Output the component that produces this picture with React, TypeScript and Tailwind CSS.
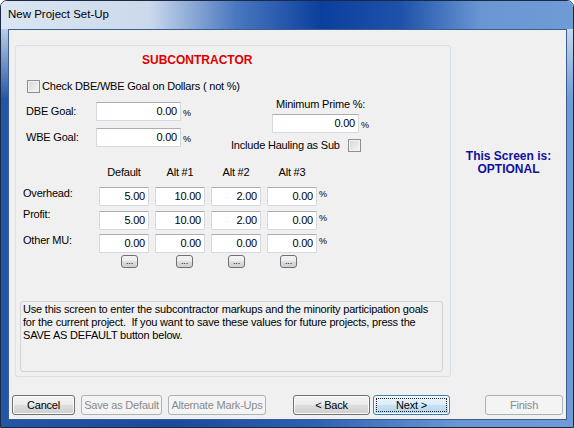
import React from 'react';

// Win7-style "New Project Set-Up" wizard page (subcontractor markups)

const btnBase = 'h-[20px] rounded-[3px] border text-center leading-[18px] text-[11px] shrink-0';
const btnNormal =
    'border-[#707070] bg-[linear-gradient(180deg,#f3f3f3_0%,#ebebeb_48%,#dddddd_52%,#cfcfcf_100%)] shadow-[inset_0_0_0_1px_#fbfbfb] text-black';
const btnDisabled = 'border-[#adb2b5] bg-[#f4f4f4] text-[#8a8a8a]';

function Field({ value, w }: { value: string; w: string }) {
    return (
        <div
            className={`${w} h-[19px] shrink-0 bg-white border border-[#d5d9e0] border-t-[#abadb3] text-right pr-[3px] leading-[17px] text-[11px] text-black`}
        >
            {value}
        </div>
    );
}

function Pct() {
    return <span className="ml-[2px] text-[9px] leading-none mt-[3px]">%</span>;
}

function Checkbox({ className = '' }: { className?: string }) {
    return (
        <span
            className={`inline-block w-[13px] h-[13px] shrink-0 border border-[#8e8f8f] bg-[linear-gradient(135deg,#d6d6d6_0%,#f6f6f6_100%)] shadow-[inset_0_0_0_1px_#f2f2f2] ${className}`}
        />
    );
}

function Dots({ className = '' }: { className?: string }) {
    return (
        <div
            className={`w-[17px] h-[13px] shrink-0 rounded-[3px] border border-[#707070] bg-[linear-gradient(180deg,#f3f3f3_0%,#ebebeb_48%,#dddddd_52%,#cfcfcf_100%)] flex items-end justify-center text-[9px] leading-[9px] pb-[1px] ${className}`}
        >
            ...
        </div>
    );
}

const rows = [
    { label: 'Overhead:', values: ['5.00', '10.00', '2.00', '0.00'], rowMt: 'mt-[8px]', labelMt: 'mt-0' },
    { label: 'Profit:', values: ['5.00', '10.00', '2.00', '0.00'], rowMt: 'mt-[5px]', labelMt: '-mt-[3px]' },
    { label: 'Other MU:', values: ['0.00', '0.00', '0.00', '0.00'], rowMt: 'mt-[4px]', labelMt: 'mt-0' },
];

export default function App() {
    return (
        <div className="w-[574px] h-[428px] flex flex-col overflow-hidden rounded-t-[7px] border border-[#1b2a44] font-['Liberation_Sans',Arial,sans-serif] text-[11px] text-black">
            {/* title bar */}
            <div className="h-[28px] shrink-0 flex items-center pl-[7px] text-[11.5px] bg-[linear-gradient(90deg,#dbe6f2_0%,#cbd9ec_26%,#4a78c0_41%,#0b3f9d_56%,#1f52aa_70%,#6a97d3_84%,#6f9cd7_100%)]">
                New Project Set-Up
            </div>

            {/* frame + client area */}
            <div className="flex-1 flex pl-[7px] pr-[6px] pb-[7px] bg-[linear-gradient(180deg,rgba(214,226,241,0.85)_0px,rgba(214,226,241,0)_70px),linear-gradient(90deg,#2556a6_0%,#1b4a9c_30%,#2e61b2_55%,#6a97d3_80%,#6f9cd7_100%)]">
                <div className="flex-1 flex flex-col border border-[#3b5e92] bg-[#f0f0f0]">
                    <div className="flex pt-[15px]">
                        {/* main panel */}
                        <div className="ml-[6px] w-[436px] h-[332px] shrink-0 border border-[#d5dfe5] rounded-[3px] flex flex-col tracking-[-0.2px]">
                            <div className="mt-[7px] pl-[126px] h-[14px] leading-[14px] text-[12px] font-bold text-[#dd0000] tracking-normal">
                                SUBCONTRACTOR
                            </div>

                            <div className="mt-[13px] ml-[11px] flex items-center h-[13px]">
                                <Checkbox />
                                <span className="ml-[2px]">Check DBE/WBE Goal on Dollars ( not %)</span>
                            </div>

                            {/* goals */}
                            <div className="mt-[5px] flex items-start">
                                <div className="ml-[10px] w-[205px] mt-[4px] flex flex-col gap-[7px]">
                                    <div className="flex items-center h-[19px]">
                                        <span className="w-[70px]">DBE Goal:</span>
                                        <Field value="0.00" w="w-[85px]" />
                                        <Pct />
                                    </div>
                                    <div className="flex items-center h-[19px]">
                                        <span className="w-[70px]">WBE Goal:</span>
                                        <Field value="0.00" w="w-[85px]" />
                                        <Pct />
                                    </div>
                                </div>
                                <div className="flex flex-col">
                                    <div className="ml-[45px] h-[13px] leading-[13px]">Minimum Prime %:</div>
                                    <div className="ml-[41px] mt-[3px] flex items-center">
                                        <Field value="0.00" w="w-[87px]" />
                                        <Pct />
                                    </div>
                                    <div className="mt-[6px] flex items-center h-[13px]">
                                        <span>Include Hauling as Sub</span>
                                        <Checkbox className="ml-[8px]" />
                                    </div>
                                </div>
                            </div>

                            {/* markups grid */}
                            <div className="mt-[14px] ml-[83px] flex gap-[6px] h-[13px] leading-[13px]">
                                {['Default', 'Alt #1', 'Alt #2', 'Alt #3'].map((h) => (
                                    <span key={h} className="w-[50px] text-center">
                                        {h}
                                    </span>
                                ))}
                            </div>
                            {rows.map((r) => (
                                <div key={r.label} className={`${r.rowMt} ml-[7px] flex items-start`}>
                                    <span className={`w-[76px] leading-[13px] ${r.labelMt}`}>{r.label}</span>
                                    <div className="flex gap-[6px]">
                                        {r.values.map((v, i) => (
                                            <Field key={i} value={v} w="w-[50px]" />
                                        ))}
                                    </div>
                                    <Pct />
                                </div>
                            ))}
                            <div className="mt-[2px] flex">
                                <Dots className="ml-[105px]" />
                                <Dots className="ml-[38px]" />
                                <Dots className="ml-[35px]" />
                                <Dots className="ml-[35px]" />
                            </div>

                            {/* help text */}
                            <div className="mt-[33px] ml-[4px] w-[423px] h-[71px] border border-[#d3d3d3] rounded-[3px] pl-[2px] pt-[1px] leading-[13px] whitespace-pre">
                                {'Use this screen to enter the subcontractor markups and the minority participation goals\nfor the current project.  If you want to save these values for future projects, press the\nSAVE AS DEFAULT button below.'}
                            </div>
                        </div>

                        {/* side note */}
                        <div className="flex-1 flex flex-col items-center pt-[105px] text-[12px] font-bold text-[#10109e] leading-[13px]">
                            <span>This Screen is:</span>
                            <span>OPTIONAL</span>
                        </div>
                    </div>

                    {/* buttons */}
                    <div className="mt-[18px] pl-[3px] flex items-start tracking-[-0.2px]">
                        <div className={`${btnBase} ${btnNormal} w-[63px]`}>Cancel</div>
                        <div className={`${btnBase} ${btnDisabled} w-[81px] ml-[6px]`}>Save as Default</div>
                        <div className={`${btnBase} ${btnDisabled} w-[98px] ml-[6px]`}>Alternate Mark-Ups</div>
                        <div className={`${btnBase} ${btnNormal} w-[77px] ml-[27px]`}>&lt; Back</div>
                        <div className={`${btnBase} w-[77px] ml-[3px] p-[2px] border-[#3c7fb1] bg-[linear-gradient(180deg,#eaf5fc_0%,#dcecf8_48%,#c6e0f4_52%,#b4d6f0_100%)] shadow-[inset_0_0_0_1px_#f4faff]`}>
                            <div className="h-full border border-dotted border-[#222] leading-[12px]">Next &gt;</div>
                        </div>
                        <div className={`${btnBase} ${btnDisabled} w-[78px] ml-[35px]`}>Finish</div>
                    </div>
                </div>
            </div>
        </div>
    );
}
